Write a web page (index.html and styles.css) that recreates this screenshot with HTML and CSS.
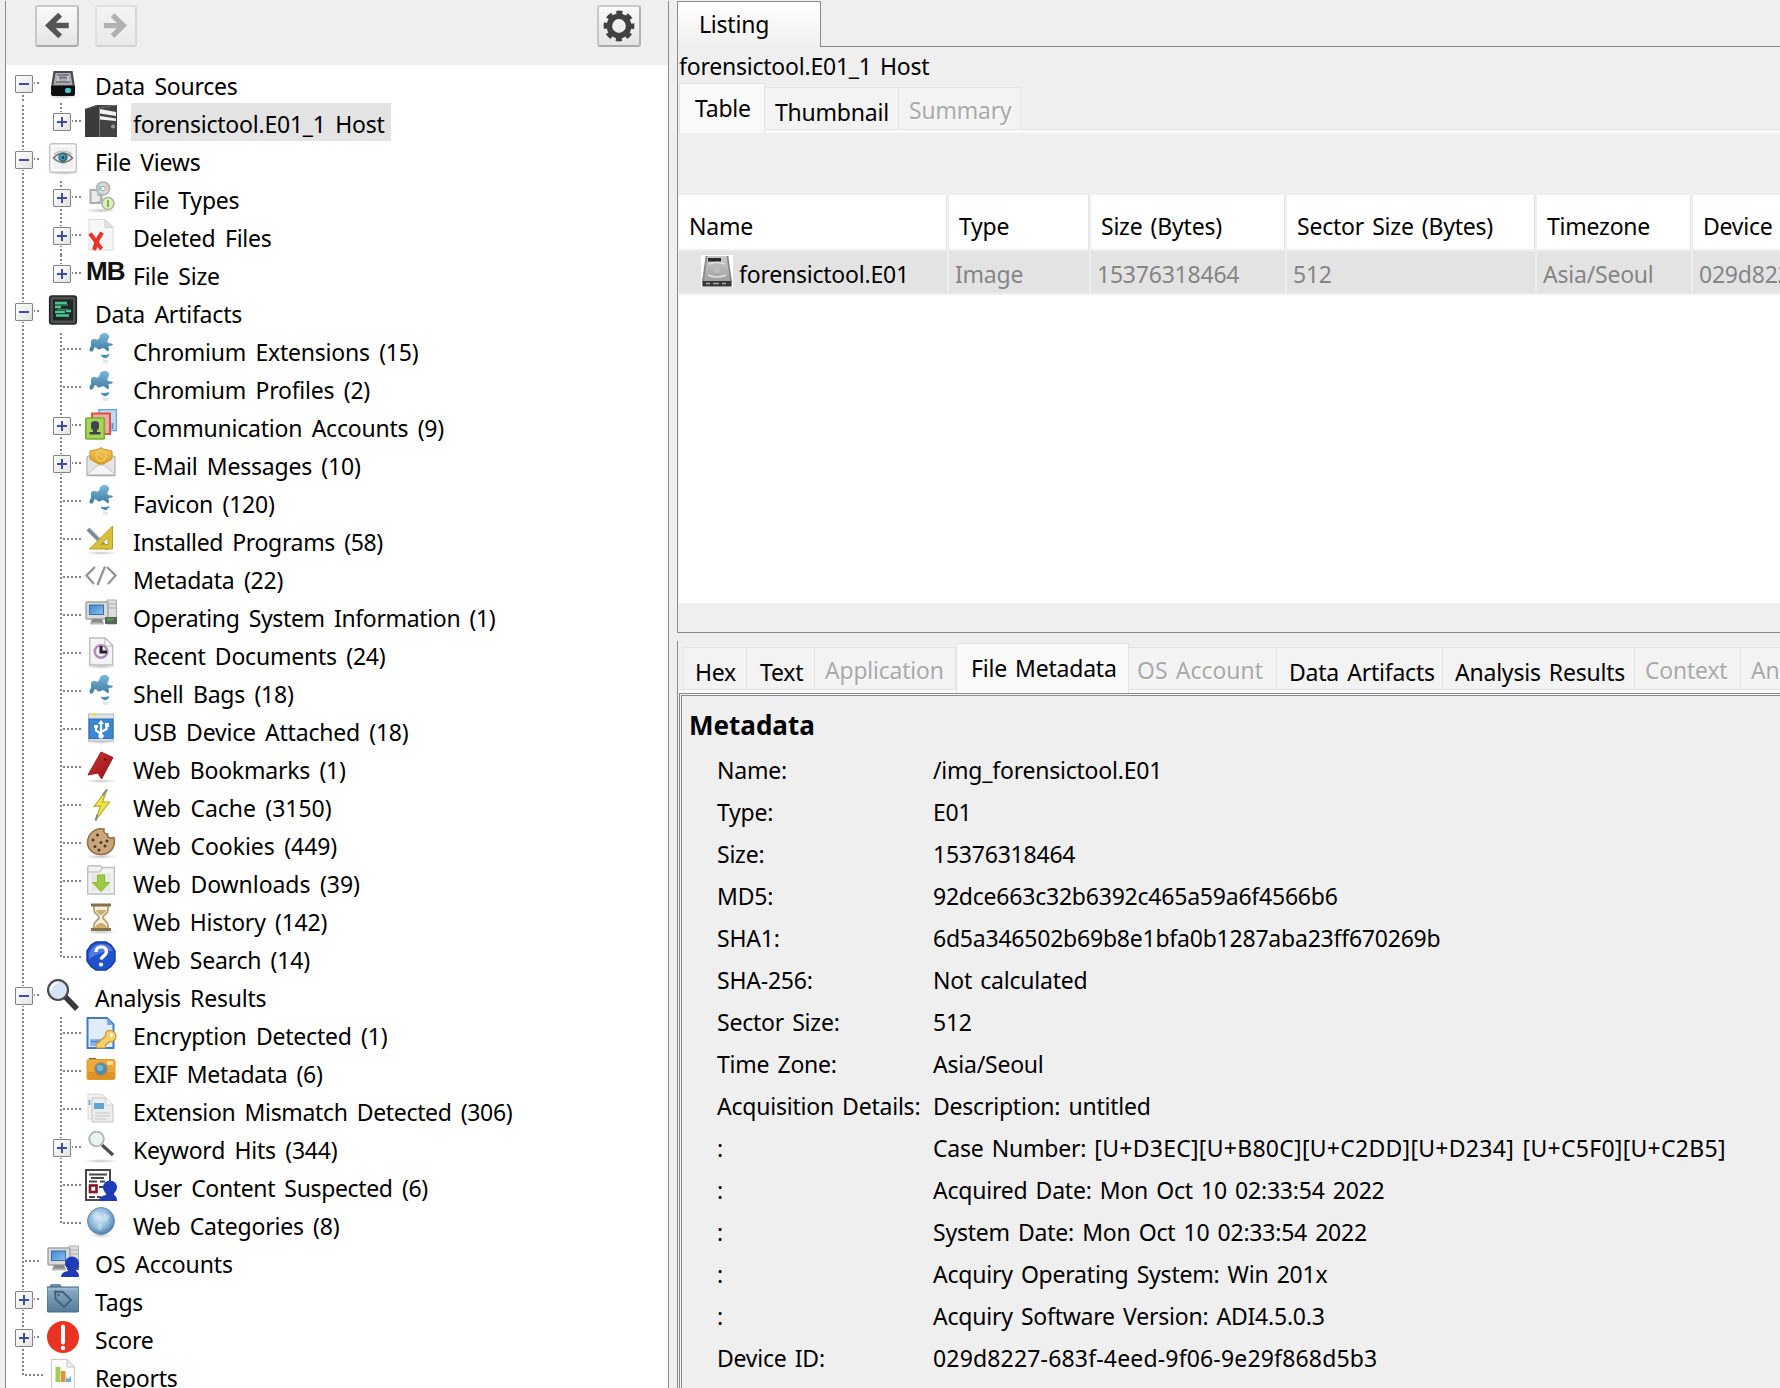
FILE: index.html
```html
<!DOCTYPE html>
<html lang="en">
<head>
<meta charset="utf-8">
<title>Forensic Browser</title>
<link rel="stylesheet" href="styles.css">
</head>
<body>
<svg class="defs" aria-hidden="true">
  <defs>
    <linearGradient id="gBlue" x1="0" y1="0" x2="0" y2="1"><stop offset="0" stop-color="#7db8dc"/><stop offset="1" stop-color="#3f7ba3"/></linearGradient>
    <linearGradient id="gSteel" x1="0" y1="0" x2="0" y2="1"><stop offset="0" stop-color="#8fb0c9"/><stop offset="1" stop-color="#567b98"/></linearGradient>
    <linearGradient id="gScreen" x1="0" y1="0" x2="1" y2="1"><stop offset="0" stop-color="#3f86cf"/><stop offset="1" stop-color="#8cc0ee"/></linearGradient>
    <linearGradient id="gDisk" x1="0" y1="0" x2="0" y2="1"><stop offset="0" stop-color="#c9c9c9"/><stop offset="1" stop-color="#979797"/></linearGradient>
    <linearGradient id="gGold" x1="0" y1="0" x2="0" y2="1"><stop offset="0" stop-color="#f3c85a"/><stop offset="1" stop-color="#d99a1f"/></linearGradient>
    <radialGradient id="gGlobe" cx=".45" cy=".4" r=".6"><stop offset="0" stop-color="#d6ebf8"/><stop offset=".6" stop-color="#8fb9da"/><stop offset="1" stop-color="#4a7cab"/></radialGradient>
    <radialGradient id="gShade"><stop offset="0" stop-color="#000" stop-opacity=".22"/><stop offset="1" stop-color="#000" stop-opacity="0"/></radialGradient>
    <linearGradient id="gRed" x1="0" y1="0" x2="1" y2="1"><stop offset="0" stop-color="#d4393a"/><stop offset="1" stop-color="#8e0f14"/></linearGradient>

    <symbol id="disk" viewBox="0 0 32 32">
      <ellipse cx="16" cy="29.500" rx="16" ry="2.500" fill="url(#gShade)"/>
      <path d="M6.500 4h19l2.500 16H4z" fill="#4a4a4a"/><path d="M8.500 6h15l2 12h-19z" fill="#a9acae"/>
      <path d="M10.500 8h11M10 11.500c4-1.500 8-1.500 12 0M9 15h14" stroke="#6e7174" stroke-width="1.500" fill="none"/>
      <path d="M11 9v5M21 9v5" stroke="#dcdcdc" stroke-width="1.500"/>
      <path d="M4 19h24v8q0 2-2 2H6q-2 0-2-2z" fill="#0d0f10"/><rect x="18" y="21" width="6" height="5" rx="2" fill="#45c8d8"/>
    </symbol>
    <symbol id="host" viewBox="0 0 32 32">
      <path d="M0 4L11 0h20L15 3v29H0z" fill="#4a4a4a"/><path d="M0 4l14-2v30H0z" fill="#3b3b3b"/><path d="M15 3l17-3v32H15z" fill="#434343"/>
      <path d="M14.500 2.500V32" stroke="#777" stroke-width="1"/>
      <path d="M15 4l16 3v4l-16-2.500zM15 11l16 2.500v2.500l-16-1.500z" fill="#f2f2f2"/><circle cx="28" cy="21.500" r="2" fill="#9a9a9a"/>
    </symbol>
    <symbol id="views" viewBox="0 0 32 32">
      <ellipse cx="16" cy="30" rx="16" ry="2" fill="url(#gShade)"/>
      <rect x="2.700" y=".7" width="26.600" height="28.600" rx="2.500" fill="#fafafa" stroke="#c4c4c4" stroke-width="1.400"/><rect x="6" y="4" width="20" height="22" fill="#f1f1f1"/>
      <path d="M6.500 15Q16 5.500 25.500 15Q16 24 6.500 15z" fill="#e8eced" stroke="#777" stroke-width="1.700"/><path d="M7 11Q16 5 25 11" fill="none" stroke="#b5b5b5" stroke-width="1.200"/>
      <circle cx="16" cy="14.500" r="4.700" fill="#4a6873"/><circle cx="15.500" cy="14" r="3" fill="#36a2c2"/><circle cx="16" cy="14.500" r="1.300" fill="#18313b"/>
    </symbol>
    <symbol id="types" viewBox="0 0 32 32">
      <ellipse cx="16" cy="29.500" rx="16" ry="2.500" fill="url(#gShade)"/>
      <rect x="5.500" y="9" width="10.500" height="13" fill="#eaeaea" stroke="#adadad" stroke-width="2"/>
      <circle cx="18" cy="7.500" r="6.500" fill="#d5dddd" stroke="#acb2b2" stroke-width="1.600"/><path d="M14 3.500l4 4-5 3" fill="#8fc6d2"/><path d="M22 3l-4 4.500 5 2" fill="#eacdb0"/><circle cx="18" cy="7.500" r="2.200" fill="#fff" stroke="#aaa"/>
      <path d="M12 14h5v7h-5" fill="none" stroke="#b2b2b2" stroke-width="1.500"/><circle cx="23" cy="22.500" r="6" fill="#dff0c0" stroke="#aab59c" stroke-width="1.600"/><path d="M23 19v7" stroke="#86b545" stroke-width="2"/>
    </symbol>
    <symbol id="deleted" viewBox="0 0 32 32">
      <path d="M4 .5h16l8 8V31H4z" fill="#f7f7f7" stroke="#dadada"/><path d="M20 .5v8h8z" fill="#e4e4e4" stroke="#cfcfcf"/>
      <path d="M5 14.500L16.500 30" stroke="#e8332a" stroke-width="4"/><path d="M17 13.500L12.500 21 9 31" stroke="#e8332a" stroke-width="4.200" fill="none"/>
    </symbol>
    <symbol id="artifacts" viewBox="0 0 32 32">
      <rect x="2.700" y="1" width="26.600" height="28" rx="2.500" fill="#4d4f50" stroke="#222425" stroke-width="1.600"/><rect x="6" y="4.500" width="20" height="21" fill="#1e2826"/>
      <path d="M8 8h12M8 12h6M8 17h10M19 16h5M9 20.500h13" stroke="#4fc594" stroke-width="2.400"/><path d="M8 10h13M10 14.500h11" stroke="#35805f" stroke-width="1.300"/>
    </symbol>
    <symbol id="puzzle" viewBox="0 0 32 32">
      <path d="M14.500 4C15 1 17 0 19.500 0c3 0 5 2 4.500 4.500-.3 1.800-2 2.800-1.500 4.500 1 2 3 .8 5.500 2-.4 1.400-1.600 2-3 1.800-1.800-.2-1.600 1-1.200 2.500.5 1.400.2 2.600-1 2.800-2-.4-2.600-3-4.800-2.800-2.400.3-3.300 1.500-4.700 1.200-1.700-.4-1-2-2.500-2.300-1.600-.2-1.700 1.300-2.300 2.500C7.500 19.500 4 19 4.500 16c.3-1.800 2-2.500 1.500-5 0-2-.5-4 1.800-4.800 2.200-.7 3.200.8 4.700.2 1.200-.6 1.700-1 2-2.400z" fill="url(#gBlue)"/>
      <path d="M15.500 21.500c3 1 6 .6 9-.5-.6 2.500-2 3.400-3.500 4.300-2.800-.3-4.800-1.600-5.500-3.800z" fill="#4c8bb2"/><path d="M18 26l5 1v3h-5z" fill="#dbe8f1"/>
    </symbol>
    <symbol id="accounts" viewBox="0 0 32 32">
      <path d="M14 .5h17.500v21H14z" fill="#b8dcf5" stroke="#67a2d3" stroke-width="1.500"/><path d="M7 4.500h18V25H7z" fill="#f3aaa0" stroke="#dc4f42" stroke-width="2"/>
      <rect x=".8" y="9" width="18.500" height="21" rx="1" fill="#a9d45c" stroke="#76ad31" stroke-width="1.600"/>
      <path d="M6 15q0-3 4-3t4 3v3q0 2-2 3.500v1.500h3.500v2.500h-11V23H8v-1.500Q6 20 6 18z" fill="#3f4548"/><path d="M27.500 14v6" stroke="#5e97c9" stroke-width="2"/>
    </symbol>
    <symbol id="mail" viewBox="0 0 32 32">
      <path d="M2 10l2-1h24l2 1v18H2z" fill="#e5e5e5" stroke="#b9b9b9" stroke-width="1.400"/>
      <path d="M5 4l9-2 2-1.500L18 2l9 2v8l-11 6.500L5 12z" fill="url(#gGold)" stroke="#c79332"/><circle cx="16" cy="9" r="5" fill="none" stroke="#f0cd6c" stroke-width="1.400"/><path d="M12 6l8 6" stroke="#f0cd6c" stroke-width="1.400"/>
      <path d="M2 27.500l11-9.500h6l11 9.500" fill="#f4f4f4" stroke="#c2c2c2"/><path d="M2 28.500h28" stroke="#aaa" stroke-width="1.500"/>
    </symbol>
    <symbol id="programs" viewBox="0 0 32 32">
      <ellipse cx="16" cy="30" rx="16" ry="2" fill="url(#gShade)"/>
      <path d="M3 6l20 20" stroke="#7d8b93" stroke-width="4"/><path d="M4.500 5.500l17 17" stroke="#a6b1b7" stroke-width="1"/>
      <path d="M27.500 3v23h-23zM23 14.500v7H16z" fill="#d9c03d" fill-rule="evenodd" stroke="#b89d27"/>
    </symbol>
    <symbol id="metadata" viewBox="0 0 32 32">
      <path d="M10 6L1.500 14.500 9 23M22 6l8.500 8.500L23 23M20 5.500L12.500 24" fill="none" stroke="#949494" stroke-width="2.300"/>
    </symbol>
    <symbol id="computer" viewBox="0 0 32 32">
      <path d="M22 1h9.500v24H22z" fill="#dedede" stroke="#aaa"/><path d="M23 5h8M23 9h8" stroke="#aaa"/>
      <rect x="1" y="3" width="22" height="17" rx="1" fill="#d9d9d9" stroke="#a2a2a2" stroke-width="1.400"/><rect x="4.500" y="6" width="14" height="9.500" fill="url(#gScreen)" stroke="#3b6fa8"/>
      <path d="M7 20h10l2 5H5z" fill="#8b8b8b"/><path d="M5 24.500h14" stroke="#b9b9b9" stroke-width="2"/><rect x="20" y="18" width="12" height="7" fill="#5e625c"/><path d="M22 20.500h7" stroke="#4aa43d" stroke-width="2"/>
    </symbol>
    <symbol id="recent" viewBox="0 0 32 32">
      <ellipse cx="16" cy="29.500" rx="16" ry="2.500" fill="url(#gShade)"/>
      <path d="M4.700 1h15.500l7.500 7.500V28H4.700z" fill="#f4f4f6" stroke="#bdbdbd" stroke-width="1.400"/><path d="M20 1v8h7.500z" fill="#fff" stroke="#b4b4b4"/>
      <circle cx="16" cy="14.500" r="6.300" fill="#f0eaf3" stroke="#b08bbd" stroke-width="2.400"/><path d="M16 9v6h6" stroke="#222" stroke-width="3" fill="none"/>
    </symbol>
    <symbol id="usb" viewBox="0 0 32 32">
      <ellipse cx="16" cy="29" rx="15" ry="2" fill="url(#gShade)"/><rect x="3.500" y="1" width="25" height="27" fill="#e0e3e6" stroke="#b4bac0"/><rect x="4" y="6" width="24" height="19.500" fill="#3b87d3" stroke="#2e6fb4"/><rect x="8" y="0" width="3" height="3" fill="#f1e63a"/>
      <path d="M16 25V10M16 21l-5-3.500V13M16 19l5.500-3v-4" stroke="#fff" stroke-width="2.200" fill="none"/><path d="M16 7l3 4h-6zM9 12h4v3H9zM20 10h4v4h-4z" fill="#fff"/><circle cx="16" cy="23" r="2.600" fill="#fff"/>
    </symbol>
    <symbol id="bookmark" viewBox="0 0 32 32">
      <ellipse cx="16" cy="30" rx="16" ry="2" fill="url(#gShade)"/><path d="M16 1l12 5.500L16.500 28 13 22 3 24z" fill="url(#gRed)" stroke="#9f1c1e"/><circle cx="20" cy="8.500" r="1.300" fill="#6b0c0f"/>
    </symbol>
    <symbol id="cache" viewBox="0 0 32 32">
      <path d="M22 .5l-13 17 6.500-.5L10.500 31.500l14-18.500h-7z" fill="#efe33d" stroke="#b5ab3e" stroke-width="1.200"/><path d="M22 .5l-4.500 6M10.500 31.500l2-6" stroke="#888" stroke-width="2"/>
    </symbol>
    <symbol id="cookie" viewBox="0 0 32 32">
      <ellipse cx="16" cy="29.500" rx="16" ry="2.500" fill="url(#gShade)"/><path d="M19 2c-1 3 1 5 3.500 5-.5 3.500 2.500 5 6.500 3.500C31 20 25.500 27.500 16 27.500 8.500 27.500 2.500 22.500 2.500 15.500 2.500 7 10 .5 19 2z" fill="#caa67a" stroke="#94704a" stroke-width="1.600"/>
      <g fill="#4a3829"><circle cx="12.500" cy="8" r="1.500"/><circle cx="8" cy="13" r="1.500"/><circle cx="16" cy="15.500" r="1.500"/><circle cx="10" cy="19.500" r="1.500"/><circle cx="22" cy="14" r="1.500"/><circle cx="20" cy="19" r="1.500"/><circle cx="14" cy="23" r="1.500"/></g>
    </symbol>
    <symbol id="downloads" viewBox="0 0 32 32">
      <path d="M2.700 3q0-2.300 2-2.300h10.500L17 2.500h12.300V29H2.700z" fill="#f3f3f3" stroke="#c0c0c0" stroke-width="1.400"/><path d="M3 7h11l4-4" stroke="#c9c9c9" stroke-width="1.600" fill="none"/><path d="M6 8.500h20V26H6z" fill="#e6e8e4"/><path d="M12.500 10h7v7.500h5L16 26.500 7.500 17.500h5z" fill="#9ccb43" stroke="#86b52f"/>
    </symbol>
    <symbol id="history" viewBox="0 0 32 32">
      <ellipse cx="16" cy="29" rx="16" ry="2.500" fill="url(#gShade)"/><path d="M9 2h14v5c0 4-5 5-5 7.500s5 3.500 5 7.500v4H9v-4c0-4 5-5 5-7.500S9 11 9 7z" fill="#f0ede4" stroke="#b3a06a" stroke-width="1.800"/><path d="M11 7h10c-.5 3-4 4-5 5.500C15 11 11.500 10 11 7zM10 25c1-4 5-5 6-5s5 1 6 5z" fill="#c9ae67"/><path d="M6 2h20M6 26.500h20" stroke="#84734a" stroke-width="2.800"/>
    </symbol>
    <symbol id="search" viewBox="0 0 32 32">
      <path d="M11 1h10l5 3 4 6v10l-4 5.500-5 3.500H11l-5-3.500L2 20V10l4-6z" fill="#1f52cc" stroke="#173a9c" stroke-width="1.400"/><path d="M4 13C6 6 10 3 17 3c5 0 9 2 11 7-9 0-15 2-24 8z" fill="#6b95e6" opacity=".65"/>
      <path d="M11 11c0-7 10.500-6.500 10.500-.5 0 4.500-5 4-5.300 8" fill="none" stroke="#fff" stroke-width="3.400"/><circle cx="16" cy="23.500" r="2.100" fill="#fff"/>
    </symbol>
    <symbol id="lens" viewBox="0 0 32 32">
      <path d="M18.500 18L30 30" stroke="#3a3a3a" stroke-width="5.500"/><circle cx="11" cy="11" r="10" fill="#d5e4f4" stroke="#4b4b4b" stroke-width="2.200"/><path d="M4 11a7 7 0 0 1 7-7" stroke="#fff" stroke-width="2" fill="none"/>
    </symbol>
    <symbol id="encryption" viewBox="0 0 32 32">
      <path d="M2.500 1H22l6.500 6.500V31h-26z" fill="#e2edfb" stroke="#3f7cc8" stroke-width="2"/><path d="M22 1v7h6.500z" fill="#7ba9e2"/><path d="M5 22h13v7H5z" fill="#8bb7ee"/><path d="M6 24.500h9" stroke="#4785cf" stroke-width="1.500"/>
      <path d="M10.500 28l10-9c-1-3.500 2-6 5-5.500 3 0 5.500 3 5.500 6s-3 6-6 5l-4.500 3.500v3H12z" fill="#f5cf6c" stroke="#c8962e" stroke-width="1.200"/><circle cx="26.500" cy="18" r="1.700" fill="#fff"/>
    </symbol>
    <symbol id="exif" viewBox="0 0 32 32">
      <path d="M4 5V3h7v2z" fill="#7a6036"/><rect x="2" y="4.500" width="28" height="20" rx="1.500" fill="#eca838" stroke="#e09a2a"/><path d="M2.500 17h27v7h-27z" fill="#df9226"/><rect x="22" y="6" width="6" height="4" fill="#f7db95"/><circle cx="16" cy="14" r="6.300" fill="#5489a9" stroke="#b58a4b" stroke-width="1.300"/><circle cx="15" cy="13" r="3.200" fill="#75b6d9"/>
    </symbol>
    <symbol id="mismatch" viewBox="0 0 32 32">
      <path d="M3 1h14l6 6v19H3z" fill="#f1f1f1" stroke="#d8d8d8"/><path d="M7 5h14l7 7v17H7z" fill="#ececec" stroke="#c4c4c4"/><path d="M21 5v7h7z" fill="#fff" stroke="#cfcfcf"/><rect x="9" y="10" width="10" height="6" fill="#5fa4d4"/><path d="M4.500 7v5" stroke="#7db3d8" stroke-width="2"/><path d="M10 20h15M10 23h15M10 26h12" stroke="#c6c6c6"/>
    </symbol>
    <symbol id="keyword" viewBox="0 0 32 32">
      <ellipse cx="16" cy="30" rx="18" ry="2" fill="url(#gShade)"/><path d="M17 14l11 10" stroke="#4b4b4b" stroke-width="3.200"/><circle cx="11.500" cy="8" r="7.300" fill="#ecf4f1" stroke="#adb3b1" stroke-width="1.800"/>
    </symbol>
    <symbol id="person" viewBox="0 0 32 32">
      <circle cx="25" cy="18.500" r="7" fill="#1f3bb8"/><path d="M21 22h8v4q3 1 3 6H14q0-5 7-6z" fill="#1f3bb8"/>
    </symbol>
    <symbol id="usercontent" viewBox="0 0 32 32">
      <rect x="1" y="1" width="24" height="30" fill="#fff" stroke="#484848" stroke-width="2"/><path d="M4 5.500h18M6 9h13M4 12.500h8M15 12.500h5M14 18h6M4 28h6M12 28h4" stroke="#474747" stroke-width="2"/><rect x="5" y="16.500" width="6.500" height="6.500" fill="#fff" stroke="#8d1524" stroke-width="2.600"/><use href="#person"/>
    </symbol>
    <symbol id="globe" viewBox="0 0 32 32">
      <ellipse cx="16" cy="28.500" rx="11" ry="2.500" fill="url(#gShade)"/><circle cx="16" cy="14" r="13.500" fill="url(#gGlobe)" stroke="#6790b6"/><path d="M7 8l5-4 3 3-3 5-3 1zM19 6l5 3-2 6-4-2zM13 16l5 2-2 6-4-2z" fill="#e3f2fb" opacity=".4"/>
    </symbol>
    <symbol id="osaccounts" viewBox="0 0 32 32"><use href="#computer"/><use href="#person"/></symbol>
    <symbol id="tags" viewBox="0 0 32 32">
      <path d="M2 4l2-3h9l2 3z" fill="#6789a3"/><path d="M0 4h32v24q0 1-2 1H2q-2 0-2-1z" fill="url(#gSteel)" stroke="#49687f"/><path d="M1 6h30" stroke="#acc6d8"/><path d="M8 8.500l8 .5 8 8-7 7-8.500-8z" fill="none" stroke="#44627a" stroke-width="1.900"/><circle cx="11.500" cy="12" r="1.300" fill="#44627a"/>
    </symbol>
    <symbol id="score" viewBox="0 0 32 32">
      <circle cx="16" cy="16" r="16" fill="#ea3323"/><path d="M16 5.500v16" stroke="#fff" stroke-width="4" stroke-linecap="round"/><circle cx="16" cy="27" r="2.200" fill="#fff"/>
    </symbol>
    <symbol id="reports" viewBox="0 0 32 32">
      <path d="M4.500.5H20l7.500 7.500V31h-23z" fill="#fbfbfb" stroke="#c9c9c9"/><path d="M20 .5V8h7.500z" fill="#eee" stroke="#c9c9c9"/><rect x="8.500" y="8" width="5" height="15" fill="#a6ce55"/><rect x="14" y="12" width="4.500" height="11" fill="#e08f43"/><path d="M19 18l2 2 3-3v6h-5z" fill="#61b5dc"/>
    </symbol>
    <symbol id="image" viewBox="0 0 32 32">
      <rect width="32" height="32" fill="#fff"/><path d="M5.500 1h21l4 23v8H1.500v-8z" fill="url(#gDisk)"/><path d="M5.500 1L2 27M26.500 1L30 27" stroke="#888" stroke-width="1.800"/><path d="M7 3h13v3.500H7z" fill="#292929"/><path d="M8 9q8-3 16 0M7 20q9 4 18 0" stroke="#e3e3e3" stroke-width="1.500" fill="none"/><circle cx="16" cy="15" r="3" fill="#bdbdbd"/><path d="M1.500 26h29v5h-29z" fill="#383838"/><path d="M5 28.500h4M12 28.500h6M21 28.500h4" stroke="#aaa" stroke-width="1.500"/>
    </symbol>
  </defs>
</svg>

<div class="app">
  <aside class="sidebar">
    <div class="toolbar">
      <button class="tool"><svg viewBox="0 0 44 42"><path d="M35 20.500H13M25.500 8.500L13 20.500l12.500 12" fill="none" stroke="#555" stroke-width="6"/></svg></button>
      <button class="tool disabled"><svg viewBox="0 0 44 42"><path d="M8 20.500h20M18 8.500l12.500 12L18 32.500" fill="none" stroke="#555" stroke-width="6"/></svg></button>
      <button class="tool gear"><svg viewBox="0 0 44 42"><circle cx="22" cy="21" r="10.700" fill="none" stroke="#414141" stroke-width="6.200"/><circle cx="22" cy="21" r="14.800" fill="none" stroke="#414141" stroke-width="4.400" stroke-dasharray="6.600 5.020" stroke-dashoffset="3.300"/></svg></button>
    </div>
    <ul class="tree">
      <li class="row"><span class="rail start"><i class="toggle minus"></i></span><svg class="icon"><use href="#disk"/></svg><span class="label">Data Sources</span></li>
      <li class="row"><span class="rail pass"></span><span class="rail child end"><i class="toggle"></i></span><svg class="icon"><use href="#host"/></svg><span class="label selected">forensictool.E01_1 Host</span></li>
      <li class="row"><span class="rail"><i class="toggle minus"></i></span><svg class="icon"><use href="#views"/></svg><span class="label">File Views</span></li>
      <li class="row"><span class="rail pass"></span><span class="rail child"><i class="toggle"></i></span><svg class="icon"><use href="#types"/></svg><span class="label">File Types</span></li>
      <li class="row"><span class="rail pass"></span><span class="rail child"><i class="toggle"></i></span><svg class="icon"><use href="#deleted"/></svg><span class="label">Deleted Files</span></li>
      <li class="row"><span class="rail pass"></span><span class="rail child end"><i class="toggle"></i></span><span class="icon mb">MB</span><span class="label">File Size</span></li>
      <li class="row"><span class="rail"><i class="toggle minus"></i></span><svg class="icon"><use href="#artifacts"/></svg><span class="label">Data Artifacts</span></li>
      <li class="row"><span class="rail pass"></span><span class="rail child"></span><svg class="icon"><use href="#puzzle"/></svg><span class="label">Chromium Extensions (15)</span></li>
      <li class="row"><span class="rail pass"></span><span class="rail child"></span><svg class="icon"><use href="#puzzle"/></svg><span class="label">Chromium Profiles (2)</span></li>
      <li class="row"><span class="rail pass"></span><span class="rail child"><i class="toggle"></i></span><svg class="icon"><use href="#accounts"/></svg><span class="label">Communication Accounts (9)</span></li>
      <li class="row"><span class="rail pass"></span><span class="rail child"><i class="toggle"></i></span><svg class="icon"><use href="#mail"/></svg><span class="label">E-Mail Messages (10)</span></li>
      <li class="row"><span class="rail pass"></span><span class="rail child"></span><svg class="icon"><use href="#puzzle"/></svg><span class="label">Favicon (120)</span></li>
      <li class="row"><span class="rail pass"></span><span class="rail child"></span><svg class="icon"><use href="#programs"/></svg><span class="label snug">Installed Programs (58)</span></li>
      <li class="row"><span class="rail pass"></span><span class="rail child"></span><svg class="icon"><use href="#metadata"/></svg><span class="label">Metadata (22)</span></li>
      <li class="row"><span class="rail pass"></span><span class="rail child"></span><svg class="icon"><use href="#computer"/></svg><span class="label snug">Operating System Information (1)</span></li>
      <li class="row"><span class="rail pass"></span><span class="rail child"></span><svg class="icon"><use href="#recent"/></svg><span class="label">Recent Documents (24)</span></li>
      <li class="row"><span class="rail pass"></span><span class="rail child"></span><svg class="icon"><use href="#puzzle"/></svg><span class="label">Shell Bags (18)</span></li>
      <li class="row"><span class="rail pass"></span><span class="rail child"></span><svg class="icon"><use href="#usb"/></svg><span class="label">USB Device Attached (18)</span></li>
      <li class="row"><span class="rail pass"></span><span class="rail child"></span><svg class="icon"><use href="#bookmark"/></svg><span class="label">Web Bookmarks (1)</span></li>
      <li class="row"><span class="rail pass"></span><span class="rail child"></span><svg class="icon"><use href="#cache"/></svg><span class="label airy">Web Cache (3150)</span></li>
      <li class="row"><span class="rail pass"></span><span class="rail child"></span><svg class="icon"><use href="#cookie"/></svg><span class="label airy">Web Cookies (449)</span></li>
      <li class="row"><span class="rail pass"></span><span class="rail child"></span><svg class="icon"><use href="#downloads"/></svg><span class="label airy">Web Downloads (39)</span></li>
      <li class="row"><span class="rail pass"></span><span class="rail child"></span><svg class="icon"><use href="#history"/></svg><span class="label">Web History (142)</span></li>
      <li class="row"><span class="rail pass"></span><span class="rail child end"></span><svg class="icon"><use href="#search"/></svg><span class="label">Web Search (14)</span></li>
      <li class="row"><span class="rail"><i class="toggle minus"></i></span><svg class="icon"><use href="#lens"/></svg><span class="label">Analysis Results</span></li>
      <li class="row"><span class="rail pass"></span><span class="rail child"></span><svg class="icon"><use href="#encryption"/></svg><span class="label">Encryption Detected (1)</span></li>
      <li class="row"><span class="rail pass"></span><span class="rail child"></span><svg class="icon"><use href="#exif"/></svg><span class="label snug">EXIF Metadata (6)</span></li>
      <li class="row"><span class="rail pass"></span><span class="rail child"></span><svg class="icon"><use href="#mismatch"/></svg><span class="label snug">Extension Mismatch Detected (306)</span></li>
      <li class="row"><span class="rail pass"></span><span class="rail child"><i class="toggle"></i></span><svg class="icon"><use href="#keyword"/></svg><span class="label">Keyword Hits (344)</span></li>
      <li class="row"><span class="rail pass"></span><span class="rail child"></span><svg class="icon"><use href="#usercontent"/></svg><span class="label snug">User Content Suspected (6)</span></li>
      <li class="row"><span class="rail pass"></span><span class="rail child end"></span><svg class="icon"><use href="#globe"/></svg><span class="label">Web Categories (8)</span></li>
      <li class="row"><span class="rail"></span><svg class="icon"><use href="#osaccounts"/></svg><span class="label airy">OS Accounts</span></li>
      <li class="row"><span class="rail"><i class="toggle"></i></span><svg class="icon"><use href="#tags"/></svg><span class="label">Tags</span></li>
      <li class="row"><span class="rail"><i class="toggle"></i></span><svg class="icon"><use href="#score"/></svg><span class="label">Score</span></li>
      <li class="row"><span class="rail end"></span><svg class="icon"><use href="#reports"/></svg><span class="label">Reports</span></li>
    </ul>
  </aside>

  <main class="main">
    <section class="listing">
      <div class="listing-head"><div class="listing-tab">Listing</div><div class="listing-rule"></div></div>
      <div class="listing-body">
        <div class="path">forensictool.E01_1 Host</div>
        <div class="tabs">
          <div class="tab active w-table">Table</div><div class="tab w-thumb">Thumbnail</div><div class="tab off w-summary">Summary</div>
        </div>
        <div class="strip"></div>
        <div class="grid">
          <div class="th">Name</div><div class="th">Type</div><div class="th">Size (Bytes)</div><div class="th">Sector Size (Bytes)</div><div class="th">Timezone</div><div class="th">Device ID</div>
          <div class="td name"><svg class="icon"><use href="#image"/></svg>forensictool.E01</div><div class="td">Image</div><div class="td">15376318464</div><div class="td">512</div><div class="td">Asia/Seoul</div><div class="td">029d8227-683f</div>
        </div>
        <div class="blank"></div>
      </div>
    </section>

    <section class="details">
      <div class="tabs lower">
        <div class="tab w-hex">Hex</div><div class="tab w-text">Text</div><div class="tab off w-app">Application</div><div class="tab active w-meta">File Metadata</div><div class="tab off w-os">OS Account</div><div class="tab w-art">Data Artifacts</div><div class="tab w-res">Analysis Results</div><div class="tab off w-ctx">Context</div><div class="tab off w-ann">Annotations</div>
      </div>
      <div class="strip"></div>
      <div class="frame"><div class="frame-inner">
        <h1>Metadata</h1>
        <dl class="meta">
          <dt>Name:</dt><dd>/img_forensictool.E01</dd>
          <dt>Type:</dt><dd>E01</dd>
          <dt>Size:</dt><dd>15376318464</dd>
          <dt>MD5:</dt><dd>92dce663c32b6392c465a59a6f4566b6</dd>
          <dt>SHA1:</dt><dd>6d5a346502b69b8e1bfa0b1287aba23ff670269b</dd>
          <dt>SHA-256:</dt><dd>Not calculated</dd>
          <dt>Sector Size:</dt><dd>512</dd>
          <dt>Time Zone:</dt><dd>Asia/Seoul</dd>
          <dt>Acquisition Details:</dt><dd>Description: untitled</dd>
          <dt>:</dt><dd>Case Number: <span class="codes">[U+D3EC][U+B80C][U+C2DD][U+D234] [U+C5F0][U+C2B5]</span></dd>
          <dt>:</dt><dd>Acquired Date: Mon Oct 10 02:33:54 2022</dd>
          <dt>:</dt><dd>System Date: Mon Oct 10 02:33:54 2022</dd>
          <dt>:</dt><dd>Acquiry Operating System: Win 201x</dd>
          <dt>:</dt><dd>Acquiry Software Version: ADI4.5.0.3</dd>
          <dt>Device ID:</dt><dd class="uuid">029d8227-683f-4eed-9f06-9e29f868d5b3</dd>
        </dl>
      </div></div>
    </section>
  </main>
</div>
</body>
</html>
```
FILE: styles.css
```css
* { box-sizing: border-box; }

html, body { margin: 0; height: 100%; overflow: hidden; }

body {
  background: #efefef;
  color: #000;
  font-family: "Noto Sans", "Noto Sans CJK KR", sans-serif;
  font-size: 23px;
  letter-spacing: -0.22px;
  word-spacing: 2.4px;
  white-space: nowrap;
}

.defs { position: absolute; width: 0; height: 0; }

.app { display: flex; height: 1388px; padding-left: 5px; }

/* Left panel */
.sidebar {
  width: 664px;
  flex: none;
  margin-top: 1px;
  border-left: 1px solid #8a8a8a;
  border-right: 1px solid #8a8a8a;
  display: flex;
  flex-direction: column;
  overflow: hidden;
}

.toolbar { display: flex; height: 64px; flex: none; padding: 4px 27px 0 29px; }

.tool {
  width: 44px;
  height: 42px;
  padding: 0;
  margin-right: 16px;
  border: 2px solid #c8c8c8;
  border-right-color: #b2b2b2;
  border-bottom-color: #aaa;
  border-radius: 3px;
  background: linear-gradient(#fafafa, #e4e4e4);
}
.tool svg { display: block; width: 100%; height: 100%; }
.tool.disabled { width: 42px; opacity: .4; }
.tool.gear { margin: 0 0 0 auto; }

.tree { flex: 1; margin: 0; padding: 0 0 0 3px; list-style: none; background: #fff; word-spacing: 3.6px; }

.row { display: flex; height: 38px; --phase: 0px; }
.row:nth-child(even) { --phase: 2px; }

.rail {
  width: 38px;
  flex: none;
  display: flex;
  padding: 10px 0 0 6px;
  background:
    repeating-linear-gradient(90deg, #858585 0 2px, transparent 2px 4px) 16px 17px / 16px 2px no-repeat,
    linear-gradient(#858585 50%, transparent 50%) 13px var(--phase) / 2px 4px repeat-y;
}
.rail.child { background-size: 18px 2px, 2px 4px; }
.rail.pass { background-size: 0 0, 2px 4px; }
.rail.end, .rail.start {
  background:
    repeating-linear-gradient(90deg, #858585 0 2px, transparent 2px 4px) 16px 17px / 18px 2px no-repeat,
    repeating-linear-gradient(#858585 0 2px, transparent 2px 4px) 13px 0 / 2px 18px no-repeat;
}
.rail.start { background-position: 16px 17px, 13px 22px; background-size: 16px 2px, 2px 16px; }

.toggle {
  width: 18px;
  height: 18px;
  border: 1px solid #858585;
  border-radius: 1px;
  background:
    linear-gradient(#3c4f9c, #3c4f9c) center / 10px 2px no-repeat,
    linear-gradient(#3c4f9c, #3c4f9c) center / 2px 10px no-repeat,
    linear-gradient(135deg, #fff, #e2e2e2);
  box-shadow: 0 0 0 1px #fff;
}
.toggle.minus {
  background:
    linear-gradient(#3c4f9c, #3c4f9c) center / 10px 2px no-repeat,
    linear-gradient(135deg, #fff, #e2e2e2);
}

.icon { width: 32px; height: 32px; flex: none; margin-top: 2px; overflow: visible; }
.mb { font: bold 26px/28px "Liberation Sans", sans-serif; letter-spacing: -1px; color: #111; padding-left: 1px; }

.label { height: 38px; line-height: 42px; margin-left: 14px; padding: 0 6px 0 2px; }
.label.selected { background: #e3e3e3; }
.label.snug { letter-spacing: -0.35px; }
.label.airy { letter-spacing: -0.05px; }

/* Right side */
.main { width: 1103px; flex: none; margin-left: 8px; display: flex; flex-direction: column; overflow: hidden; }

.listing { height: 632px; flex: none; margin-top: 1px; display: flex; flex-direction: column; }
.listing-head { display: flex; height: 46px; flex: none; }
.listing-tab {
  width: 144px;
  padding-left: 21px;
  line-height: 44px;
  border: 1px solid #8a8a8a;
  border-bottom: 0;
  background: linear-gradient(#fff, #efefef);
}
.listing-rule { flex: 1; border-bottom: 1px solid #8a8a8a; }
.listing-body { flex: 1; border: solid #8a8a8a; border-width: 0 0 1px 1px; padding-left: 1px; }
.path { height: 36px; line-height: 38px; }

.tabs { display: flex; align-items: flex-end; height: 47px; border-bottom: 1px solid #e3e3e3; }
.tab {
  flex: none;
  height: 42px;
  line-height: 48px;
  border: solid #e3e3e3;
  border-width: 1px 1px 0 0;
  background: #f3f3f3;
}
.tab.active { height: 50px; margin-bottom: -4px; background: #fafafa; border-left-width: 1px; position: relative; }
.tab.off { line-height: 44px; color: #a9a9a9; text-shadow: 1px 1px 0 #fff; }
.strip { height: 3px; background: #fafafa; }
.w-table { width: 86px; padding-left: 15px; }
.w-thumb { width: 134px; padding-left: 10px; }
.w-summary { width: 122px; padding-left: 10px; }

.grid {
  display: grid;
  grid-template-columns: 270px 142px 196px 250px 156px 200px;
  grid-template-rows: 56px 44px;
  margin-top: 62px;
}
.th { height: 54px; line-height: 62px; margin-right: 2px; padding-left: 10px; background: #fff; border-right: 1px solid #e3e3e3; }
.td { height: 42px; line-height: 46px; margin-right: 2px; padding-left: 6px; background: #e3e3e3; color: #858585; }
.td.name { display: flex; padding-left: 22px; color: #000; }
.td.name .icon { margin: 4px 6px 0 0; }
.blank { height: 308px; background: #fff; }

.details { flex: 1; margin-top: 8px; border-left: 1px solid #8a8a8a; padding-left: 1px; display: flex; flex-direction: column; }
.lower { height: 49px; flex: none; padding-left: 4px; }
.details .strip { flex: none; }
.w-hex { width: 64px; padding-left: 11px; border-left-width: 1px; }
.w-text { width: 68px; padding-left: 13px; }
.w-app { width: 141px; padding-left: 10px; }
.w-meta { width: 173px; padding-left: 14px; }
.w-os { width: 148px; padding-left: 8px; letter-spacing: -0.05px; }
.w-art { width: 166px; padding-left: 12px; }
.w-res { width: 192px; padding-left: 12px; }
.w-ctx { width: 106px; padding-left: 10px; }
.w-ann { width: 140px; padding-left: 10px; }

.frame { flex: 1; border: solid #8a8a8f; border-width: 1px 0 0 1px; padding: 1px 0 0 1px; background: #f6f6f6; }
.frame-inner { height: 100%; border: solid #8a8a8f; border-width: 1px 0 0 1px; background: #efefef; padding-left: 7px; }

h1 { margin: 0; height: 53px; font-size: 26px; line-height: 58px; font-weight: bold; letter-spacing: 0; }

.meta { display: grid; grid-template-columns: 216px 1fr; grid-auto-rows: 42px; margin: 0; padding-left: 28px; line-height: 42px; }
.meta dd { margin: 0; }
.codes { letter-spacing: 0.27px; }
.uuid { letter-spacing: 0.17px; }
```
